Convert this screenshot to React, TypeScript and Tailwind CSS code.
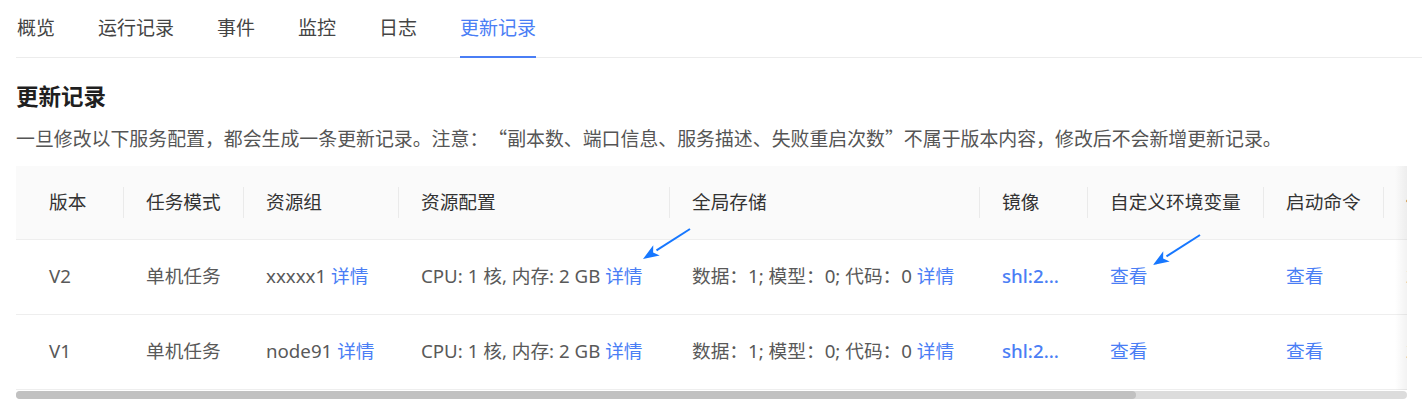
import React from 'react';

const FONT = '[font-family:"Noto_Sans","Noto_Sans_CJK_SC",sans-serif]';
const CJK = '[font-family:"Noto_Sans_CJK_SC",sans-serif]';

const tabs = ['概览', '运行记录', '事件', '监控', '日志', '更新记录'];

type Row = {
  version: string;
  mode: string;
  group: string;
  resource: string;
  storage: string;
  image: string;
  time: string;
};

const rows: Row[] = [
  {
    version: 'V2',
    mode: '单机任务',
    group: 'xxxxx1',
    resource: 'CPU: 1 核, 内存: 2 GB',
    storage: '数据：1; 模型：0; 代码：0',
    image: 'shl:20240520',
    time: '2024-05-20 14:32:11',
  },
  {
    version: 'V1',
    mode: '单机任务',
    group: 'node91',
    resource: 'CPU: 1 核, 内存: 2 GB',
    storage: '数据：1; 模型：0; 代码：0',
    image: 'shl:20240512',
    time: '2024-05-12 09:18:45',
  },
];

// column widths, in px
const cols = [
  { title: '版本', w: 'w-[108px] min-w-[108px] pl-[33px]' },
  { title: '任务模式', w: 'w-[120px] min-w-[120px]' },
  { title: '资源组', w: 'w-[155px] min-w-[155px]' },
  { title: '资源配置', w: 'w-[271px] min-w-[271px]' },
  { title: '全局存储', w: 'w-[310px] min-w-[310px]' },
  { title: '镜像', w: 'w-[108px] min-w-[108px]' },
  { title: '自定义环境变量', w: 'w-[176px] min-w-[176px]' },
  { title: '启动命令', w: 'w-[120px] min-w-[120px]' },
  { title: '修改时间', w: 'w-[222px] min-w-[222px]' },
  { title: '操作', w: 'w-[136px] min-w-[136px]' },
];

function Link({ children }: { children: React.ReactNode }) {
  return <span className="text-[#4a7ef5] cursor-pointer">{children}</span>;
}

function Arrow({ tail, tip }: { tail: [number, number]; tip: [number, number] }) {
  const dx = tail[0] - tip[0];
  const dy = tail[1] - tip[1];
  const len = Math.hypot(dx, dy);
  const ux = dx / len;
  const uy = dy / len;
  const bx = tip[0] + ux * 16;
  const by = tip[1] + uy * 16;
  const nx = -uy;
  const ny = ux;
  const pts = `${tip[0]},${tip[1]} ${bx + nx * 6},${by + ny * 6} ${tip[0] + ux * 12},${tip[1] + uy * 12} ${bx - nx * 6},${by - ny * 6}`;
  return (
    <g>
      <line x1={tail[0]} y1={tail[1]} x2={bx} y2={by} stroke="#1677ff" strokeWidth={2} />
      <polygon points={pts} fill="#1677ff" />
    </g>
  );
}

export default function App() {
  return (
    <div className={`relative w-[1422px] h-[417px] bg-white overflow-hidden ${FONT}`}>
      {/* tabs */}
      <div className="ml-4 flex h-[58px] border-b border-[#ececec] pl-[1px]">
        {tabs.map((t, i) => (
          <div
            key={t}
            className={`relative flex items-center text-[19px] leading-none ${i > 0 ? 'ml-[43px]' : ''} ${
              t === '更新记录' ? 'text-[#4a7ef5]' : 'text-[#444]'
            }`}
          >
            {t}
            {t === '更新记录' ? (
              <div className="absolute left-0 right-0 bottom-[-1px] h-[2px] bg-[#4a7ef5]" />
            ) : null}
          </div>
        ))}
      </div>

      {/* header */}
      <div className="px-4 pt-[24px]">
        <div className="text-[22.5px] leading-[30px] font-bold text-[#1f1f1f]">更新记录</div>
        <div className={`mt-[12px] text-[18.9px] leading-[28px] text-[#555] ${CJK}`}>
          一旦修改以下服务配置，都会生成一条更新记录。注意：
          <span className="inline-block w-[1em] text-right">“</span>
          副本数、端口信息、服务描述、失败重启次数
          <span className="inline-block w-[1em] text-left">”</span>
          不属于版本内容，修改后不会新增更新记录。
        </div>
      </div>

      {/* table */}
      <div className="relative ml-4 mr-[15px] mt-[14px]">
        <div className="overflow-hidden">
          <table className="border-collapse text-[18.7px] whitespace-nowrap">
            <thead>
              <tr className="bg-[#fafafa] h-[73px] border-b border-[#eeeeee]">
                {cols.map((c, i) => (
                  <th
                    key={c.title}
                    className={`relative text-left font-normal text-[#333] px-[22px] ${c.w}`}
                  >
                    {c.title}
                    {i < cols.length - 1 ? (
                      <span className="absolute right-0 top-[21px] bottom-[21px] w-px bg-[#eaeaea]" />
                    ) : null}
                  </th>
                ))}
              </tr>
            </thead>
            <tbody className="text-[#595959]">
              {rows.map((r) => (
                <tr key={r.version} className="h-[75px] border-b border-[#eeeeee]">
                  <td className="pl-[33px] px-[22px]">{r.version}</td>
                  <td className="px-[22px]">{r.mode}</td>
                  <td className="px-[22px]">
                    {r.group} <Link>详情</Link>
                  </td>
                  <td className="px-[22px]">
                    {r.resource} <Link>详情</Link>
                  </td>
                  <td className="px-[22px]">
                    {r.storage} <Link>详情</Link>
                  </td>
                  <td className="px-[22px]">
                    <div className="w-[60px] truncate font-medium text-[#4a7ef5]">{r.image}</div>
                  </td>
                  <td className="px-[22px]">
                    <Link>查看</Link>
                  </td>
                  <td className="px-[22px]">
                    <Link>查看</Link>
                  </td>
                  <td className="px-[22px]">{r.time}</td>
                  <td className="px-[22px]">
                    <Link>回滚</Link>
                  </td>
                </tr>
              ))}
            </tbody>
          </table>
        </div>
        <div className="pointer-events-none absolute right-0 top-0 bottom-[9px] w-[12px] bg-gradient-to-r from-transparent to-black/[0.05]" />
        {/* horizontal scrollbar */}
        <div className="mt-px h-[8px] rounded-full bg-[#dcdcdc]">
          <div className="h-full w-[1120px] rounded-full bg-[#c1c1c1]" />
        </div>
      </div>

      {/* annotation arrows */}
      <svg className="pointer-events-none absolute left-0 top-0" width={1422} height={417}>
        <Arrow tail={[690, 229]} tip={[643, 259]} />
        <Arrow tail={[1200, 235]} tip={[1153, 265]} />
      </svg>
    </div>
  );
}
